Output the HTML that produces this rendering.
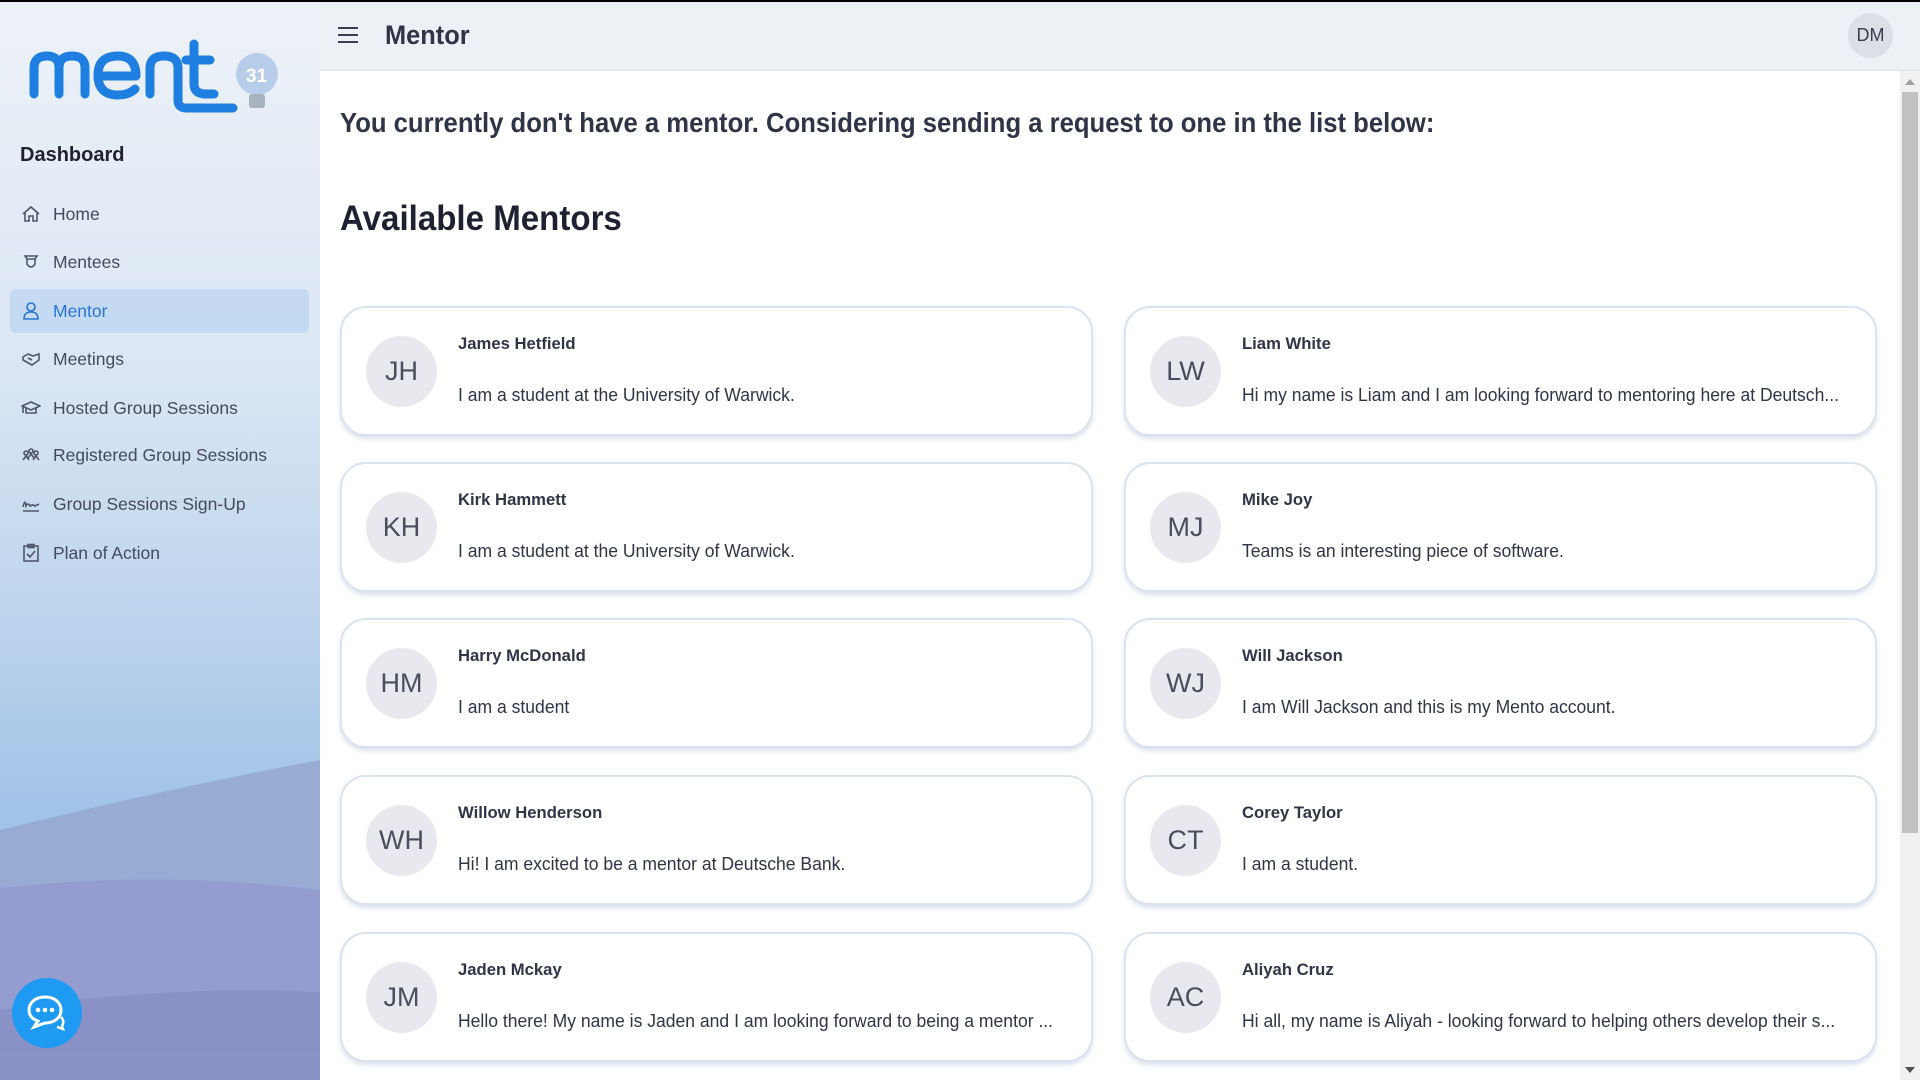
<!DOCTYPE html>
<html><head><meta charset="utf-8"><style>
*{margin:0;padding:0;box-sizing:border-box}
body{width:1920px;height:1080px;overflow:hidden;font-family:"Liberation Sans",sans-serif;background:#fff;position:relative;color:#2f3447}
.topbar{position:absolute;left:0;top:0;width:1920px;height:2px;background:#000;z-index:5}
.side{position:absolute;left:0;top:0;width:320px;height:1080px;overflow:hidden;background:linear-gradient(180deg,#eef2f8 0%,#dae6f4 35%,#b9d1ec 60%,#a1c3e7 75%)}
.side svg.bg{position:absolute;left:0;top:0}
.logo{position:absolute;left:28px;top:38px}
.dash{position:absolute;left:20px;top:144px;font-size:20px;font-weight:bold;color:#1e2130}
.nav{position:absolute;left:10px;width:299px;height:44px;display:flex;align-items:center;padding-left:11px;font-size:17.5px;color:#454a5c}
.nav svg{width:20px;height:20px;margin-right:12px;stroke:#50566a;fill:none;stroke-width:1.6}
.nav.act{background:rgba(180,208,240,.6);border-radius:6px;color:#2b74d6}
.nav.act svg{stroke:#2b74d6}
.chat{position:absolute;left:12px;top:978px;width:70px;height:70px;border-radius:50%;background:#1e9af2;display:flex;align-items:center;justify-content:center}
.header{position:absolute;left:320px;top:0;width:1600px;height:71px;background:#edf0f4;border-bottom:1px solid #dde1e6}
.ham{position:absolute;left:338px;top:26px}
.title{position:absolute;left:385px;top:20px;font-size:27px;font-weight:bold;color:#2f3447;transform:scaleX(.94);transform-origin:left}
.dm{position:absolute;left:1848px;top:13px;width:45px;height:45px;border-radius:50%;background:#dcdfe5;display:flex;align-items:center;justify-content:center;font-size:18px;color:#3a3f50}
.h1{position:absolute;left:340px;top:107px;font-size:28px;font-weight:bold;color:#2f3447;white-space:nowrap;transform:scaleX(.916);transform-origin:left}
.h2{position:absolute;left:340px;top:199px;font-size:35px;font-weight:bold;color:#1e2130;transform:scaleX(.945);transform-origin:left}
.card{position:absolute;width:753px;height:130px;border:2px solid #dbe3ef;border-radius:26px;background:#fff;box-shadow:0 3px 5px rgba(150,170,200,.35)}
.av{position:absolute;left:24px;top:28px;width:71px;height:71px;border-radius:50%;background:#e8e9ee;display:flex;align-items:center;justify-content:center;font-size:27px;color:#4a4e5c}
.nm{position:absolute;left:116px;top:26px;font-size:17px;font-weight:bold;color:#2f3447;white-space:nowrap;transform:scaleX(.98);transform-origin:left}
.ds{position:absolute;left:116px;top:77px;font-size:18px;color:#2f3447;white-space:nowrap;transform:scaleX(.975);transform-origin:left}
.sb{position:absolute;left:1900px;top:71px;width:20px;height:1009px;background:#f1f1f1}
.thumb{position:absolute;left:1902px;top:92px;width:16px;height:741px;background:#c1c1c1}
</style></head><body>
<div class="topbar"></div>
<div class="side">
<svg class="bg" width="320" height="1080" viewBox="0 0 320 1080">
<path d="M0 830 Q160 790 320 760 L320 1080 L0 1080Z" fill="#98abd3"/>
<path d="M0 888 Q160 870 320 890 L320 1080 L0 1080Z" fill="#959dd0"/>
<path d="M0 1010 Q160 985 320 992 L320 1080 L0 1080Z" fill="#8a91c7"/>
<path d="M0 1050 L320 1050" stroke="#7f86bd" stroke-width="1"/>
</svg>
<svg class="logo" width="260" height="80" viewBox="0 0 260 80" fill="none" stroke="#1f7fe0" stroke-width="9" stroke-linecap="round" stroke-linejoin="round">
<path d="M6 56 V30 Q6 18 19 18 Q31 18 31 30 V56 M31 30 Q31 18 44 18 Q57 18 57 30 V56"/>
<path d="M72 38 H108 Q108 18 90 18 Q70 18 70 37 Q70 57 90 57 Q101 57 107 51"/>
<path d="M122 56 V30 Q122 18 136 18 Q150 18 150 30 V62 Q150 70 158 70 H205"/>
<path d="M166 6 V46 Q166 56 178 56 H186"/>
<path d="M158 22 H182"/>
<circle cx="229" cy="36" r="21" fill="#b7cde9" stroke="none"/>
<rect x="221" y="56" width="16" height="14" rx="3" fill="#a9b3c0" stroke="none"/>
<text x="218" y="44" font-family="Liberation Sans" font-weight="bold" font-size="19" fill="#fff" stroke="none">31</text>
</svg>
<div class="dash">Dashboard</div>
<div class="nav" style="top:192px"><svg viewBox="0 0 20 20"><path d="M2 10 L10 3 L18 10 M4 8 V17 H8 V12 H12 V17 H16 V8"/></svg>Home</div>
<div class="nav" style="top:240px"><svg viewBox="0 0 20 20"><path d="M4 4 H16 L14 7 H6Z M6 7 V12 Q10 18 14 12 V7"/></svg>Mentees</div>
<div class="nav act" style="top:289px"><svg viewBox="0 0 20 20"><circle cx="10" cy="6" r="4"/><path d="M3 18 Q3 11 10 11 Q17 11 17 18Z"/></svg>Mentor</div>
<div class="nav" style="top:337px"><svg viewBox="0 0 20 20"><path d="M2 8 L7 5 L12 7 L18 5 L18 11 L11 16 L2 11Z M7 9 L11 11"/></svg>Meetings</div>
<div class="nav" style="top:386px"><svg viewBox="0 0 20 20"><path d="M1 8 L10 4 L19 8 L10 12Z M5 10 V15 H15 V10 M2 9 V15"/></svg>Hosted Group Sessions</div>
<div class="nav" style="top:433px"><svg viewBox="0 0 20 20"><circle cx="5" cy="8" r="2"/><circle cx="10" cy="6" r="2"/><circle cx="15" cy="8" r="2"/><path d="M2 15 L5 11 L8 15 M7 13 L10 9 L13 13 M12 15 L15 11 L18 15"/></svg>Registered Group Sessions</div>
<div class="nav" style="top:482px"><svg viewBox="0 0 20 20"><path d="M2 13 Q4 4 5 12 Q7 8 9 12 Q12 10 14 12 L18 10 M2 17 H18"/></svg>Group Sessions Sign-Up</div>
<div class="nav" style="top:531px"><svg viewBox="0 0 20 20"><rect x="3" y="3" width="14" height="15"/><rect x="7" y="1.5" width="6" height="3"/><path d="M6 11 L9 14 L14 8"/></svg>Plan of Action</div>
<div class="chat"><svg width="44" height="44" viewBox="0 0 44 44"><path d="M20 6 C30 6 36 12 36 19 C36 27 29 32 20 32 L9 36 L13 30 C7 28 4 24 4 19 C4 12 10 6 20 6Z" fill="none" stroke="#fff" stroke-width="3"/><path d="M36 26 Q40 30 37 35 L38 38 L32 36" fill="none" stroke="#fff" stroke-width="2.5"/><circle cx="13" cy="19" r="2.3" fill="#fff"/><circle cx="20" cy="19" r="2.3" fill="#fff"/><circle cx="27" cy="19" r="2.3" fill="#fff"/></svg></div>
</div>
<div class="header"></div>
<svg class="ham" width="20" height="18" viewBox="0 0 20 18"><path d="M0 2 H20 M0 9 H20 M0 16 H20" stroke="#3a3f50" stroke-width="2"/></svg>
<div class="title">Mentor</div>
<div class="dm">DM</div>
<div class="h1">You currently don't have a mentor. Considering sending a request to one in the list below:</div>
<div class="h2">Available Mentors</div>

<div class="card" style="left:340px;top:306px"><div class="av">JH</div><div class="nm">James Hetfield</div><div class="ds">I am a student at the University of Warwick.</div></div>
<div class="card" style="left:1124px;top:306px"><div class="av">LW</div><div class="nm">Liam White</div><div class="ds">Hi my name is Liam and I am looking forward to mentoring here at Deutsch...</div></div>
<div class="card" style="left:340px;top:462px"><div class="av">KH</div><div class="nm">Kirk Hammett</div><div class="ds">I am a student at the University of Warwick.</div></div>
<div class="card" style="left:1124px;top:462px"><div class="av">MJ</div><div class="nm">Mike Joy</div><div class="ds">Teams is an interesting piece of software.</div></div>
<div class="card" style="left:340px;top:618px"><div class="av">HM</div><div class="nm">Harry McDonald</div><div class="ds">I am a student</div></div>
<div class="card" style="left:1124px;top:618px"><div class="av">WJ</div><div class="nm">Will Jackson</div><div class="ds">I am Will Jackson and this is my Mento account.</div></div>
<div class="card" style="left:340px;top:775px"><div class="av">WH</div><div class="nm">Willow Henderson</div><div class="ds">Hi! I am excited to be a mentor at Deutsche Bank.</div></div>
<div class="card" style="left:1124px;top:775px"><div class="av">CT</div><div class="nm">Corey Taylor</div><div class="ds">I am a student.</div></div>
<div class="card" style="left:340px;top:932px"><div class="av">JM</div><div class="nm">Jaden Mckay</div><div class="ds">Hello there! My name is Jaden and I am looking forward to being a mentor ...</div></div>
<div class="card" style="left:1124px;top:932px"><div class="av">AC</div><div class="nm">Aliyah Cruz</div><div class="ds">Hi all, my name is Aliyah - looking forward to helping others develop their s...</div></div>

<div class="sb"></div>
<div class="thumb"></div>
<svg style="position:absolute;left:1905px;top:78px" width="10" height="8"><path d="M0 7 L5 1 L10 7Z" fill="#a0a0a0"/></svg>
<svg style="position:absolute;left:1905px;top:1066px" width="10" height="8"><path d="M0 1 L5 7 L10 1Z" fill="#505050"/></svg>
</body></html>
